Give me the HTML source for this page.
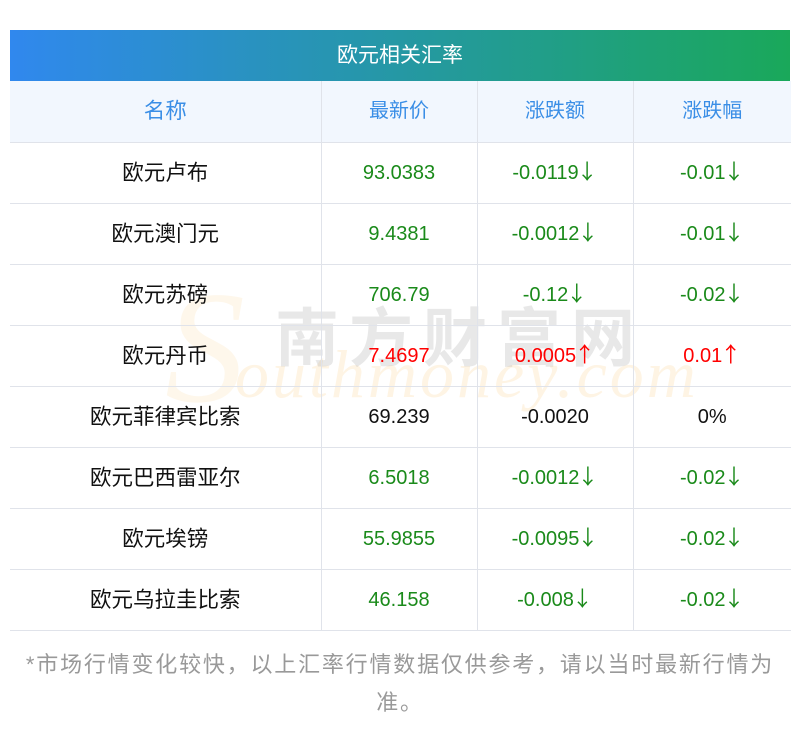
<!DOCTYPE html>
<html><head><meta charset="utf-8"><style>
body{margin:0;width:800px;height:733px;background:#fff;position:relative;overflow:hidden;font-family:"Liberation Sans","Noto Sans CJK SC",sans-serif}
.title{position:absolute;left:10px;top:30px;width:780px;height:51px;background:linear-gradient(90deg,#3088ee,#1aa85a);color:#fff;font-size:21px;line-height:51px;text-align:center}
table{position:absolute;left:10px;top:81px;width:781px;border-collapse:collapse;table-layout:fixed}
tr{height:61px}
td{height:60px;border:1px solid #e0e3ea;text-align:center;font-size:20px;color:#111;padding:0;line-height:20px;overflow:hidden}
td:first-child{font-size:21.5px}
tr td:first-child{border-left:none}tr td:last-child{border-right:none}
tr:first-child td{border-top:none;background:#f2f7fe;color:#3a8ee6}
.g{color:#1a8a1a}.r{color:#f00}
.a{font-family:"Noto Sans CJK SC",sans-serif;font-size:21px;line-height:0;margin-left:-2px}
.wm{position:absolute;font-family:"Liberation Serif",serif;font-style:italic}
.note{position:absolute;left:0;top:646px;width:800px;text-align:center;color:#999;font-size:22px;letter-spacing:1.8px;line-height:38px}
</style></head><body>
<div class="title">欧元相关汇率</div>
<div class="wm" style="left:165px;top:255px;font-size:160px;color:rgba(250,200,120,0.15)">S</div>
<div class="wm" style="left:235px;top:335px;font-size:68px;color:rgba(250,200,120,0.2);letter-spacing:3px">outhmoney.com</div>
<div style="position:absolute;left:275px;top:288px;font-size:64px;color:rgba(150,150,150,0.22);letter-spacing:10px;font-family:'Noto Sans CJK SC',sans-serif;font-weight:bold">南方财富网</div>
<table>
<colgroup><col style="width:311px"><col style="width:156px"><col style="width:156px"><col style="width:158px"></colgroup>
<tr><td>名称</td><td>最新价</td><td>涨跌额</td><td>涨跌幅</td></tr>
<tr><td>欧元卢布</td><td class="g">93.0383</td><td class="g">-0.0119<span class="a">↓</span></td><td class="g">-0.01<span class="a">↓</span></td></tr>
<tr><td>欧元澳门元</td><td class="g">9.4381</td><td class="g">-0.0012<span class="a">↓</span></td><td class="g">-0.01<span class="a">↓</span></td></tr>
<tr><td>欧元苏磅</td><td class="g">706.79</td><td class="g">-0.12<span class="a">↓</span></td><td class="g">-0.02<span class="a">↓</span></td></tr>
<tr><td>欧元丹币</td><td class="r">7.4697</td><td class="r">0.0005<span class="a">↑</span></td><td class="r">0.01<span class="a">↑</span></td></tr>
<tr><td>欧元菲律宾比索</td><td>69.239</td><td>-0.0020</td><td>0%</td></tr>
<tr><td>欧元巴西雷亚尔</td><td class="g">6.5018</td><td class="g">-0.0012<span class="a">↓</span></td><td class="g">-0.02<span class="a">↓</span></td></tr>
<tr><td>欧元埃镑</td><td class="g">55.9855</td><td class="g">-0.0095<span class="a">↓</span></td><td class="g">-0.02<span class="a">↓</span></td></tr>
<tr><td>欧元乌拉圭比索</td><td class="g">46.158</td><td class="g">-0.008<span class="a">↓</span></td><td class="g">-0.02<span class="a">↓</span></td></tr>
</table>
<div class="note">*市场行情变化较快，以上汇率行情数据仅供参考，请以当时最新行情为<br>准。</div>
</body></html>
